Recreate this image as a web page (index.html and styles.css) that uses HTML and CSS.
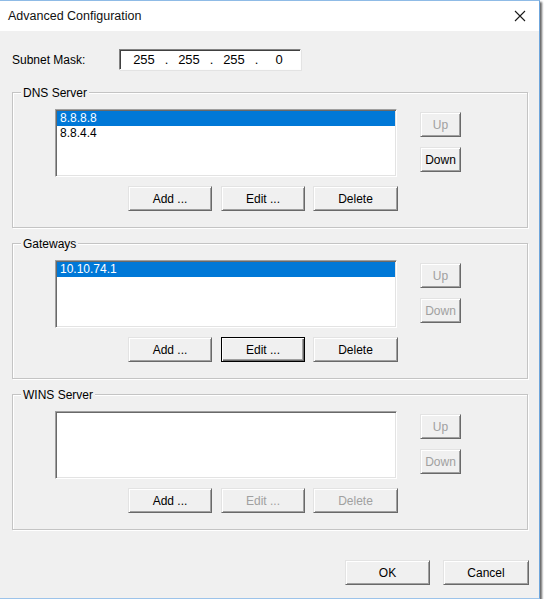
FILE: index.html
```html
<!DOCTYPE html>
<html>
<head>
<meta charset="utf-8">
<link rel="stylesheet" href="styles.css">
</head>
<body>
<div class="window">
  <div class="titlebar">
    <span class="title">Advanced Configuration</span>
    <svg class="close" width="12" height="12" viewBox="0 0 12 12"><path d="M1 1 L11 11 M11 1 L1 11" stroke="#1a1a1a" stroke-width="1.1" fill="none"/></svg>
  </div>
  <div class="client">
    <div class="subnet-row">
      <span class="lbl">Subnet Mask:</span>
      <div class="ipfield">
        <span class="oct">255</span><span class="dot">.</span><span class="oct">255</span><span class="dot">.</span><span class="oct">255</span><span class="dot">.</span><span class="oct">0</span>
      </div>
    </div>

    <div class="group first">
      <div class="legend">DNS Server</div>
      <div class="gbody">
        <div class="leftcol">
          <div class="listbox">
            <div class="item sel">8.8.8.8</div>
            <div class="item">8.8.4.4</div>
          </div>
          <div class="btnrow">
            <button class="btn w84">Add ...</button>
            <button class="btn w84 g9">Edit ...</button>
            <button class="btn w85 g8">Delete</button>
          </div>
        </div>
        <div class="rightcol">
          <button class="btn small dis">Up</button>
          <button class="btn small">Down</button>
        </div>
      </div>
    </div>

    <div class="group">
      <div class="legend">Gateways</div>
      <div class="gbody">
        <div class="leftcol">
          <div class="listbox">
            <div class="item sel">10.10.74.1</div>
          </div>
          <div class="btnrow">
            <button class="btn w84">Add ...</button>
            <button class="btn w84 g9 def">Edit ...</button>
            <button class="btn w85 g8">Delete</button>
          </div>
        </div>
        <div class="rightcol">
          <button class="btn small dis">Up</button>
          <button class="btn small dis">Down</button>
        </div>
      </div>
    </div>

    <div class="group last">
      <div class="legend">WINS Server</div>
      <div class="gbody">
        <div class="leftcol">
          <div class="listbox"></div>
          <div class="btnrow">
            <button class="btn w84">Add ...</button>
            <button class="btn w84 g9 dis">Edit ...</button>
            <button class="btn w85 g8 dis">Delete</button>
          </div>
        </div>
        <div class="rightcol">
          <button class="btn small dis">Up</button>
          <button class="btn small dis">Down</button>
        </div>
      </div>
    </div>

    <div class="footer">
      <button class="btn w85">OK</button>
      <button class="btn w86 cancel">Cancel</button>
    </div>
  </div>
</div>
</body>
</html>
```
FILE: styles.css
```css
html, body {
  margin: 0;
  padding: 0;
  background: #ffffff;
}
body {
  font-family: "Liberation Sans", Arial, sans-serif;
  font-size: 12px;
  color: #000;
}
.window {
  box-sizing: border-box;
  width: 540px;
  height: 599px;
  border-top: 1px solid #8fbbe6;
  border-right: 1px solid #6fa6dc;
  border-bottom: 1px solid #9cc3ea;
  box-shadow: 2px 2px 2px rgba(0,0,0,0.6);
  display: flex;
  flex-direction: column;
  background: #f0f0f0;
}
.titlebar {
  height: 30px;
  background: #ffffff;
  display: flex;
  align-items: center;
  justify-content: space-between;
  padding: 0 13px 0 8px;
}
.title {
  font-size: 12.5px;
  color: #111;
  padding-bottom: 1px;
}
.close {
  display: block;
}
.client {
  flex: 1;
  background: #f0f0f0;
}
.subnet-row {
  display: flex;
  align-items: center;
  margin-top: 18px;
  padding-left: 12px;
  height: 21px;
}
.lbl {
  width: 107px;
}
.ipfield {
  box-sizing: border-box;
  width: 182px;
  height: 21px;
  background: #fff;
  border-top: 1px solid #828282;
  border-left: 1px solid #828282;
  border-right: 1px solid #fdfdfd;
  border-bottom: 1px solid #fdfdfd;
  box-shadow: inset 1px 1px 0 #404040, 1px 1px 0 #e3e3e3;
  display: flex;
  align-items: center;
  padding-left: 6px;
  font-size: 13px;
}
.oct {
  width: 36px;
  text-align: center;
}
.dot {
  width: 9px;
  text-align: center;
}
.group {
  box-sizing: border-box;
  margin: 15px 0 0 12px;
  width: 516px;
  border: 1px solid #c4c4c4;
  box-shadow: inset 1px 1px 0 #fff, 1px 1px 0 #fff;
  padding: 0 0 16px 42px;
}
.group.first {
  margin-top: 22px;
}
.legend {
  height: 14px;
  line-height: 14px;
  margin: -7px 0 0 -34px;
  padding: 0 2px;
  background: #f0f0f0;
  width: max-content;
}
.gbody {
  display: flex;
  margin-top: 9px;
}
.leftcol {
  width: 343px;
}
.listbox {
  box-sizing: border-box;
  width: 342px;
  height: 68px;
  background: #fff;
  border-top: 1px solid #a0a0a0;
  border-left: 1px solid #a0a0a0;
  border-right: 1px solid #fff;
  border-bottom: 1px solid #fff;
  box-shadow: inset 1px 1px 0 #696969, inset -1px -1px 0 #e3e3e3;
  padding: 1px 1px;
}
.item {
  height: 15px;
  line-height: 15px;
  padding-left: 3px;
  font-size: 12px;
}
.item.sel {
  background: #0078d7;
  color: #fff;
}
.btnrow {
  display: flex;
  margin-top: 9px;
  padding-left: 73px;
}
.btn {
  box-sizing: border-box;
  height: 25px;
  font-family: "Liberation Sans", Arial, sans-serif;
  font-size: 12px;
  color: #000;
  background: #f0f0f0;
  border-top: 1px solid #e3e3e3;
  border-left: 1px solid #e3e3e3;
  border-right: 1px solid #696969;
  border-bottom: 1px solid #696969;
  box-shadow: inset 1px 1px 0 #fff, inset -1px -1px 0 #a0a0a0;
  padding: 0;
  margin: 0;
  text-align: center;
}
.w84 { width: 84px; }
.w85 { width: 85px; }
.w86 { width: 86px; }
.g9 { margin-left: 9px; }
.g8 { margin-left: 8px; }
.btn.def {
  border: 1px solid #000;
  box-shadow: inset 1px 1px 0 #fff, inset -1px -1px 0 #696969, inset -2px -2px 0 #a0a0a0;
}
.btn.dis {
  color: #a0a0a0;
}
.rightcol {
  display: flex;
  flex-direction: column;
  margin-left: 22px;
  padding-top: 3px;
  gap: 10px;
}
.btn.small {
  width: 41px;
  height: 25px;
}
.footer {
  display: flex;
  justify-content: flex-end;
  margin-top: 30px;
  padding-right: 10px;
}
.cancel {
  margin-left: 13px;
}
```
